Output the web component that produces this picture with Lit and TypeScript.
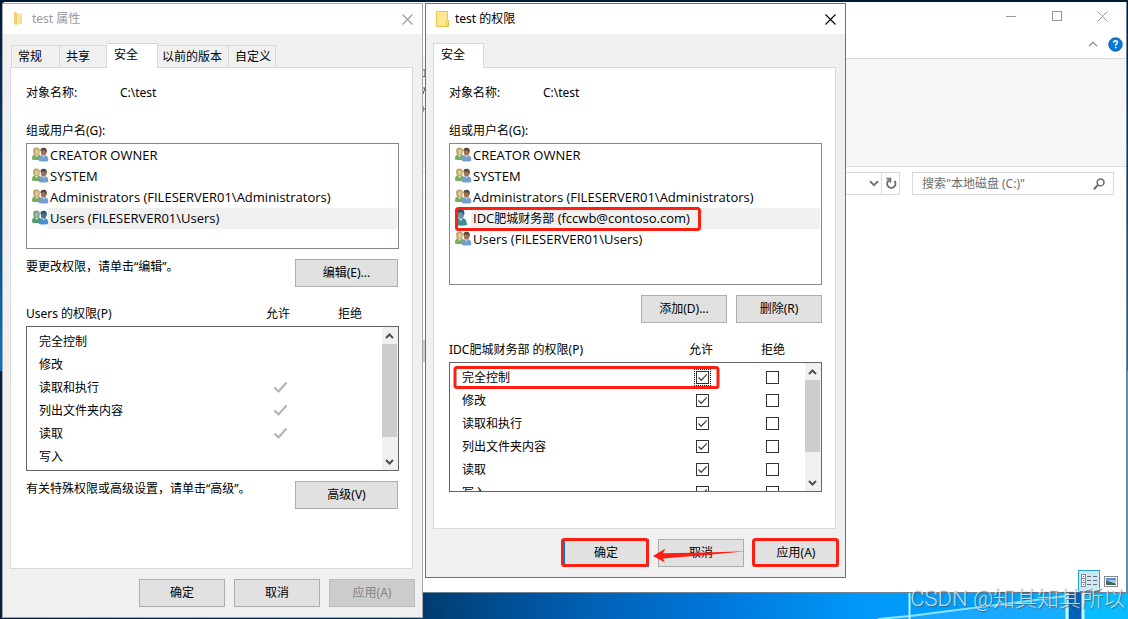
import { LitElement, html, css, svg, nothing } from "lit";
import { customElement, property } from "lit/decorators.js";
import { classMap } from "lit/directives/class-map.js";

const base = css`
  *, *::before, *::after { box-sizing: border-box; }
  button, input {
    font: inherit;
    color: inherit;
    margin: 0;
    padding: 0;
    border: 0;
    border-radius: 0;
    background: none;
  }
  svg { display: block; }
`;

interface Principal { name: string; cjk?: string; kind: "group" | "user"; selected?: boolean; }
interface Permission { name: string; allow: boolean; focus?: boolean; }

const groupIcon = (selected: boolean) => html`
  <svg width="17" height="16" viewBox="0 0 17 16" aria-hidden="true">
    <path d="M0 12.6V10.5Q0 8 2.6 7.4L7 7.4Q9.4 8 9.5 11V12.6Q5 13.6 0 12.6Z" fill=${selected ? "#4f9a6c" : "#7dab5c"} />
    <path d="M2.8 7.4L4.6 10L6.6 7.4Z" fill="#dfe9cc" />
    <path d="M1.2 4.4Q0.6 0.6 4.4 0.6Q8.2 0.6 7.8 4.8Q7.8 7.6 6.4 8L2.6 8Q1.2 7.4 1.2 4.4Z" fill=${selected ? "#7f9c86" : "#b7a465"} />
    <ellipse cx="4.8" cy="4.8" rx="2" ry="2.7" fill=${selected ? "#9fb5aa" : "#e0c795"} />
    <path d="M6.8 14V11.4Q7 8.8 9.8 8.2L13.2 8.2Q16 8.8 16.2 11.4V14Q11.6 15 6.8 14Z" fill=${selected ? "#4a8fcf" : "#739fce"} />
    <path d="M10 8.2L11.6 10.6L13.2 8.2Z" fill="#d3e1ef" />
    <ellipse cx="11.6" cy="5" rx="2.8" ry="3.6" fill=${selected ? "#4c6f88" : "#a0714c"} />
    <path d="M8.4 4.6Q8 0.9 11.6 0.8Q15.2 0.9 14.8 5L14.1 6Q14 3.4 12.2 3.2Q10 3.6 9.3 3.4Z" fill=${selected ? "#2b506c" : "#4e4842"} />
  </svg>`;

const userIcon = html`
  <svg width="17" height="19" viewBox="0 0 17 19" aria-hidden="true">
    <path d="M0.4 17Q0.6 10.6 4 10L8 10Q11.8 11 12 17Q6 18.6 0.4 17Z" fill="#3a9094" />
    <path d="M3.8 10L5.8 13.2L8 10Z" fill="#c9dfe4" />
    <ellipse cx="5.8" cy="6.2" rx="3.3" ry="4.4" fill="#6f93a5" />
    <path d="M2 5.6Q1.7 1.2 5.8 1.2Q10 1.4 9.4 6.2L8.5 7Q8.3 4.4 6.4 4.2Q4.2 4.7 3 4.4Z" fill="#2f5468" />
  </svg>`;

const chevron = (up: boolean) => html`
  <svg width="9" height="6" viewBox="0 0 9 6" aria-hidden="true">
    <path d=${up ? "M1 5L4.5 1.5L8 5" : "M1 1L4.5 4.5L8 1"} fill="none" stroke="#505050" stroke-width="2" />
  </svg>`;

@customElement("folder-icon")
class FolderIcon extends LitElement {
  @property({ type: Boolean }) small = false;
  static styles = css`svg { display: block; }`;
  render() {
    return this.small
      ? html`<svg width="14" height="16" viewBox="0 0 14 16" aria-hidden="true">
          <path d="M1 1L7 2.5V13L2 14L1 13Z" fill="#fbe6a0" />
          <path d="M1 1L4 2.5V14L1 12.5Z" fill="#f3cf68" />
          <path d="M7 2.5L9 3.5V12.5L7 13Z" fill="#f8dc8c" />
        </svg>`
      : html`<svg width="14" height="16" viewBox="0 0 14 16" aria-hidden="true">
          <path d="M0.5 0.5H11.5V9.5H12.5V15.5H0.5Z" fill="#ffe794" stroke="#e8c44c" />
          <path d="M10.5 10V14.5H12.5V9.5Z" fill="#fff0b8" stroke="#e8c44c" />
        </svg>`;
  }
}

@customElement("scroll-rail")
class ScrollRail extends LitElement {
  static styles = [base, css`
    :host { display: flex; flex-direction: column; width: 16px; background: #f0f0f0; }
    button { display: grid; place-items: center; height: 17px; flex: none; padding-right: 2px; }
    .track { flex: 1; display: flex; flex-direction: column; padding-right: 1px; }
    .thumb { background: #cdcdcd; }
  `];
  @property({ type: Number }) share = 0.8;
  render() {
    return html`
      <button aria-label="Up">${chevron(true)}</button>
      <div class="track"><div class="thumb" style="height:${this.share * 100}%"></div></div>
      <button aria-label="Down">${chevron(false)}</button>`;
  }
}

@customElement("security-dialog")
class SecurityDialog extends LitElement {
  @property() heading = "";
  @property() subject = "";
  @property({ type: Boolean }) editable = false;
  @property({ attribute: false }) tabs: string[] = [];
  @property({ attribute: false }) principals: Principal[] = [];
  @property({ attribute: false }) permissions: Permission[] = [];

  static styles = [base, css`
    :host {
      display: block;
      border: 1px solid #a6a6a6;
      background: #f0f0f0;
      font-size: 12px;
      line-height: 16px;
      color: #000;
    }
    :host([editable]) { border-color: #707070; }
    .title {
      display: flex;
      align-items: center;
      height: 30px;
      padding: 0 9px 0 10px;
      gap: 5px;
      background: #fff;
      color: #999;
    }
    :host([editable]) .title { color: #000; }
    .title span { flex: 1; }
    .frame { padding: 9px 9px 0 7px; }
    .tabs { display: flex; align-items: flex-end; height: 24px; padding-left: 1px; }
    :host([editable]) .tabs { padding-left: 0; }
    .tab {
      height: 22px;
      min-width: 47px;
      padding: 0 4px 0 6px;
      border: 1px solid #d9d9d9;
      border-width: 1px 1px 0 0;
      text-align: left;
      white-space: nowrap;
    }
    .tab:first-child { min-width: 49px; border-left-width: 1px; }
    .tab.active {
      height: 25px;
      min-width: 51px;
      margin-bottom: -1px;
      padding: 0 4px 2px 7px;
      background: #fff;
    }
    .tab.active + .tab { padding: 0 6px 0 4px; }
    .panel { border: 1px solid #d9d9d9; background: #fff; padding: 17px 13px 59px 15px; }
    :host([editable]) .panel { padding-bottom: 36px; }
    .object { display: grid; grid-template-columns: 94px 1fr; }
    .label { display: block; margin-top: 22px; }
    .list {
      height: 106px;
      margin: 4px 0 0;
      padding: 1px 1px 1px 5px;
      border: 1px solid #828790;
      list-style: none;
    }
    :host([editable]) .list { height: 142px; }
    .item { display: grid; grid-template-columns: 16px 1fr; height: 21px; align-items: start; }
    .item svg { margin-top: 2px; }
    .item svg[height="19"] { margin-top: 0; }
    .item span { height: 21px; padding-left: 2px; line-height: 21px; font-family: "Open Sans", "Noto Sans CJK SC", sans-serif; font-size: 13px; white-space: nowrap; }
    .item .cjk { padding: 0; font-size: 12px; }
    .item.selected span { background: #f0f0f0; }
    .line { display: flex; justify-content: space-between; align-items: flex-start; margin-top: 10px; padding-right: 1px; }
    .line.end { justify-content: flex-end; gap: 9px; padding-right: 0; }
    .btn {
      width: 86px;
      height: 28px;
      border: 1px solid #adadad;
      background: #e1e1e1;
      text-align: center;
    }
    .btn.wide { width: 103px; }
    .btn.default { border: 2px solid #0078d7; }
    .btn:disabled { background: #ccc; border-color: #bfbfbf; color: #838383; }
    .head { display: grid; grid-template-columns: 1fr 72px 72px; margin-top: 19px; padding-right: 13px; text-align: center; }
    .head span:first-child { text-align: left; }
    .perms {
      display: grid;
      grid-template-columns: 1fr 16px;
      height: 145px;
      margin-top: 4px;
      border: 1px solid #646464;
      overflow: hidden;
    }
    :host([editable]) .perms { height: 130px; }
    .clip { overflow: hidden; padding-top: 3px; }
    table { width: 100%; border-collapse: collapse; table-layout: fixed; }
    th, td { height: 23px; padding: 0; font-weight: normal; text-align: left; }
    th { padding-left: 12px; }
    .allow { width: 70px; }
    .mark { width: 48px; }
    .slot { display: grid; place-items: center start; padding-left: 9px; height: 23px; }
    input[type="checkbox"] { appearance: none; display: block; width: 13px; height: 13px; border: 1px solid #333; background: #fff; }
    input[type="checkbox"]:checked {
      background: #fff url("data:image/svg+xml,%3Csvg xmlns='http://www.w3.org/2000/svg' viewBox='0 0 11 11'%3E%3Cpath d='M1.5 5.5L4.2 8.2L9.8 2.4' fill='none' stroke='%23444' stroke-width='1.3'/%3E%3C/svg%3E");
    }
    input[type="checkbox"].ghost {
      width: 15px;
      border: 0;
      background: none;
    }
    input[type="checkbox"].ghost:checked {
      background: url("data:image/svg+xml,%3Csvg xmlns='http://www.w3.org/2000/svg' viewBox='0 0 15 13'%3E%3Cpath d='M1.5 6.5L5.5 10.5L13.5 1.5' fill='none' stroke='%23b4b4b4' stroke-width='2.2'/%3E%3C/svg%3E");
    }
    .focus .allow .slot { background: linear-gradient(#000, #000) 0 0 / 0 0 no-repeat; }
    .focus .allow .slot input { outline: 1px dotted #000; outline-offset: 1px; }
    .footer { display: flex; justify-content: flex-end; gap: 9px; padding: 10px 7px 10px 0; }
    :host([editable]) .footer { padding-right: 6px; }
    .notes { position: absolute; inset: 0; pointer-events: none; }
  `];

  render() {
    const e = this.editable;
    return html`
      <div class="title">
        <folder-icon ?small=${!e}></folder-icon>
        <span>${this.heading}</span>
        <button aria-label="关闭">
          <svg width="11" height="11" viewBox="0 0 11 11"><path d="M0.5 0.5L10.5 10.5M10.5 0.5L0.5 10.5" stroke=${e ? "#000" : "#999"} stroke-width="1.1" /></svg>
        </button>
      </div>
      <div class="frame">
        <div class="tabs" role="tablist">
          ${this.tabs.map((t) => html`<button role="tab" class=${classMap({ tab: true, active: t === "安全" })}>${t}</button>`)}
        </div>
        <div class="panel">
          <div class="object"><span>对象名称:</span><span>C:\\test</span></div>
          <span class="label" id="groups">组或用户名(G):</span>
          <ul class="list" role="listbox" aria-labelledby="groups">
            ${this.principals.map((p) => html`
              <li role="option" class=${classMap({ item: true, selected: !!p.selected })}>
                ${p.kind === "user" ? userIcon : groupIcon(!!p.selected)}
                <span>${p.cjk ? html`IDC<span class="cjk">${p.cjk}</span>` : nothing}${p.name}</span>
              </li>`)}
          </ul>
          ${e
            ? html`<div class="line end"><button class="btn">添加(D)...</button><button class="btn">删除(R)</button></div>`
            : html`<div class="line"><span>要更改权限，请单击“编辑”。</span><button class="btn wide">编辑(E)...</button></div>`}
          <div class="head"><span>${this.subject} 的权限(P)</span><span>允许</span><span>拒绝</span></div>
          <div class="perms">
            <div class="clip">
              <table>
                ${this.permissions.map((p) => html`
                  <tr class=${p.focus ? "focus" : ""}>
                    <th scope="row">${p.name}</th>
                    <td class="allow"><div class="slot"><input type="checkbox" class=${e ? "" : "ghost"} aria-label="${p.name} 允许" .checked=${p.allow} ?disabled=${!e}></div></td>
                    <td class="mark"><div class="slot"><input type="checkbox" class=${e ? "" : "ghost"} aria-label="${p.name} 拒绝" ?disabled=${!e}></div></td>
                  </tr>`)}
              </table>
            </div>
            <scroll-rail .share=${e ? 0.77 : 0.85}></scroll-rail>
          </div>
          ${e ? nothing : html`<div class="line"><span>有关特殊权限或高级设置，请单击“高级”。</span><button class="btn wide">高级(V)</button></div>`}
        </div>
      </div>
      <div class="footer">
        <button class="btn ${e ? "default" : ""}">确定</button>
        <button class="btn">取消</button>
        <button class="btn" ?disabled=${!e}>应用(A)</button>
      </div>
      ${e ? html`
        <svg class="notes" width="419" height="573" viewBox="0 0 419 573" aria-hidden="true">
          <g fill="none" stroke="#ff1f12" stroke-width="3">
            <rect x="30.5" y="204.5" width="243" height="21" rx="2" />
            <rect x="29" y="363.5" width="263" height="20" rx="2" />
            <rect x="136.5" y="535.5" width="85" height="26" rx="2" />
            <rect x="327.5" y="535.5" width="84" height="26" rx="2" />
          </g>
          ${svg`<path d="M227 552L239.5 544.5L237 549.2Q280 548.6 320 547.2Q280 551.4 237 554.4L239 558.5Z" fill="#ff1f12" />`}
        </svg>` : nothing}`;
  }
}

@customElement("explorer-window")
class ExplorerWindow extends LitElement {
  static styles = [base, css`
    :host { display: flex; flex-direction: column; background: #fff; border: 1px solid #6f8396; border-width: 0 1px 1px; font-size: 12px; line-height: 16px; }
    .caption { display: flex; justify-content: flex-end; gap: 35px; height: 28px; padding: 0 18px 0 0; align-items: center; }
    .menu { display: flex; justify-content: flex-end; align-items: center; gap: 10px; height: 28px; padding: 0 3px 0 0; }
    .ribbon { height: 109px; background: #f5f6f7; border: 1px solid #dadbdc; border-width: 1px 0; }
    .nav { display: flex; gap: 12px; padding: 5px 12px 0 0; }
    .address, .search { display: flex; align-items: center; height: 23px; border: 1px solid #d9d9d9; }
    .address { flex: 1; justify-content: flex-end; gap: 2px; }
    .reload { display: grid; place-items: center; width: 18px; height: 21px; border-left: 1px solid #d9d9d9; }
    .search { width: 202px; padding: 0 8px 0 9px; }
    .search input { flex: 1; min-width: 0; color: #6d6d6d; outline: 0; }
    .search input::placeholder { color: #6d6d6d; opacity: 1; }
    .body { flex: 1; }
    .status { display: flex; justify-content: flex-end; align-items: center; gap: 4px; padding-right: 8px; height: 22px; }
    .view { display: grid; place-items: center; width: 22px; height: 22px; border: 1px solid #26a0da; background: #cbe8f6; }
  `];
  render() {
    return html`
      <div class="caption">
        <button aria-label="最小化"><svg width="11" height="11"><path d="M0 5.5H10" stroke="#999" /></svg></button>
        <button aria-label="最大化"><svg width="10" height="10"><rect x="0.5" y="0.5" width="9" height="9" fill="none" stroke="#999" /></svg></button>
        <button aria-label="关闭"><svg width="11" height="11"><path d="M0.5 0.5L10.5 10.5M10.5 0.5L0.5 10.5" stroke="#999" /></svg></button>
      </div>
      <div class="menu">
        <button aria-label="折叠"><svg width="10" height="6"><path d="M1 5.2L5 1.2L9 5.2" fill="none" stroke="#999" stroke-width="1.5" /></svg></button>
        <button aria-label="帮助">
          <svg width="15" height="15" viewBox="0 0 15 15"><circle cx="7.5" cy="7.5" r="6.7" fill="#0a78d6" stroke="#0b5cab" /><path d="M5.6 5.6Q5.7 3.8 7.6 3.8Q9.5 3.9 9.4 5.4Q9.3 6.4 8.2 7.1Q7.6 7.6 7.6 8.7M7.6 9.8V11.3" fill="none" stroke="#fff" stroke-width="1.5" /></svg>
        </button>
      </div>
      <div class="ribbon"></div>
      <div class="nav">
        <div class="address">
          <svg width="10" height="7" aria-hidden="true"><path d="M1 1.2L5 5.2L9 1.2" fill="none" stroke="#777" stroke-width="2" /></svg>
          <button class="reload" aria-label="刷新"><svg width="12" height="13" viewBox="0 0 12 13"><path d="M4.2 3.1A4.2 4.2 0 1 0 9.4 3.9" fill="none" stroke="#6d6d6d" stroke-width="1.8" /><path d="M1.4 1.7H5.4V5.8" fill="none" stroke="#6d6d6d" stroke-width="1.7" /></svg></button>
        </div>
        <label class="search">
          <input type="text" aria-label="搜索" placeholder='搜索"本地磁盘 (C:)"'>
          <svg width="12" height="12" viewBox="0 0 12 12" aria-hidden="true"><circle cx="7.6" cy="4.4" r="3.4" fill="none" stroke="#6d6d6d" stroke-width="1.6" /><path d="M5.2 6.8L0.8 11.2" stroke="#6d6d6d" stroke-width="2" /></svg>
        </label>
      </div>
      <div class="body"></div>
      <div class="status">
        <button class="view" aria-label="详细信息">
          <svg width="16" height="14" viewBox="0 0 16 14" shape-rendering="crispEdges">
            <g fill="#fff" stroke="#8a8a8a"><rect x="0.5" y="0.5" width="4" height="4" /><rect x="0.5" y="4.5" width="4" height="4" /><rect x="0.5" y="8.5" width="4" height="4" /></g>
            <path d="M2 2h1v1h-1z" fill="#444" /><path d="M2 6h1v1h-1z" fill="#2c78c8" /><path d="M2 10h1v1h-1z" fill="#d02020" />
            <path d="M6 2.5h4M12 2.5h4M6 6.5h4M12 6.5h4M6 10.5h4M12 10.5h4" stroke="#6d6d6d" />
          </svg>
        </button>
        <button aria-label="缩略图">
          <svg width="14" height="11" viewBox="0 0 14 11"><rect x="0.5" y="0.5" width="13" height="10" fill="#fff" stroke="#8a8a8a" /><rect x="2" y="2" width="10" height="7" fill="#a9cdf0" /><path d="M2 2H12V4.5Q7 3.5 2 5Z" fill="#5b8fd6" /><path d="M2 5Q6 5 12 8V9H2Z" fill="#3f6a58" /></svg>
        </button>
      </div>`;
  }
}

@customElement("app-root")
class AppRoot extends LitElement {
  static styles = [base, css`
    :host { display: block; font-family: "Noto Sans", "Noto Sans CJK SC", sans-serif; }
    .desktop {
      position: relative;
      height: 100vh;
      min-height: 619px;
      overflow: hidden;
      background: linear-gradient(90deg, #021f42 0%, #00305e 35%, #004078 39%, #0060b4 52%, #0078dc 64%, #0098f8 76%, #00a4ff 90%, #00b8ff 100%);
    }
    .shade { position: absolute; inset: 0 0 auto; height: 60%; background: linear-gradient(#001a38 0%, #00366e 35%, #0078c8 100%); }
    .wall { position: absolute; right: 0; bottom: 0; }
    explorer-window { position: absolute; left: 3px; right: 1px; top: 2px; bottom: 26px; }
    .sliver { position: absolute; left: 422px; top: 68px; }
    .left, .right { position: absolute; top: 3px; width: 421px; }
    .left { left: 2px; }
    .right { left: 425px; }
    .mark {
      position: absolute;
      right: 3px;
      bottom: 5px;
      font: 22px/30px Roboto, "Noto Sans CJK SC", sans-serif;
      font-weight: 300;
      color: rgba(235, 240, 244, 0.82);
      text-shadow: 1px 1px 1px rgba(70, 80, 90, 0.75);
      white-space: nowrap;
    }
  `];

  private owners: Principal[] = [
    { name: "CREATOR OWNER", kind: "group" },
    { name: "SYSTEM", kind: "group" },
    { name: "Administrators (FILESERVER01\\Administrators)", kind: "group" },
  ];

  private names = ["完全控制", "修改", "读取和执行", "列出文件夹内容", "读取", "写入"];

  render() {
    const users = "Users (FILESERVER01\\Users)";
    return html`
      <div class="desktop">
        <div class="shade"></div>
        <svg class="wall" width="280" height="26" viewBox="0 0 280 26" aria-hidden="true">
          <path d="M20 26Q130 18 218 5V26Z" fill="#2fb0ff" opacity="0.5" />
          <path d="M30 26L62 23L218 3" fill="none" stroke="#9beaff" stroke-width="2" opacity="0.9" />
          <path d="M61.500 0V26" stroke="#b5f2ff" stroke-width="2" />
          <rect x="221" y="0" width="13" height="26" fill="#0560b8" />
          <path d="M219 0V26M235 0V26" stroke="#c9f6ff" stroke-width="3" />
          <path d="M237 2L280 0V26H237Z" fill="#08bcff" />
        </svg>
        <explorer-window></explorer-window>
        <svg class="sliver" width="4" height="296" viewBox="0 0 4 296" aria-hidden="true">
          <path d="M0 2H3V8M0 8.500H3M0 20H3L1 26M0 41H3M1 38V44" fill="none" stroke="#555" />
          <rect y="272" width="4" height="22" fill="#cdcdcd" />
        </svg>
        <security-dialog class="left" heading="test 属性" subject="Users"
          .tabs=${["常规", "共享", "安全", "以前的版本", "自定义"]}
          .principals=${[...this.owners, { name: users, kind: "group", selected: true }]}
          .permissions=${this.names.map((name, i) => ({ name, allow: i > 1 && i < 5 }))}></security-dialog>
        <security-dialog class="right" editable heading="test 的权限" subject="IDC肥城财务部"
          .tabs=${["安全"]}
          .principals=${[...this.owners, { name: " (fccwb@contoso.com)", cjk: "肥城财务部", kind: "user", selected: true }, { name: users, kind: "group" }]}
          .permissions=${this.names.map((name, i) => ({ name, allow: true, focus: i === 0 }))}></security-dialog>
        <div class="mark">CSDN @知其知其所以</div>
      </div>`;
  }
}
